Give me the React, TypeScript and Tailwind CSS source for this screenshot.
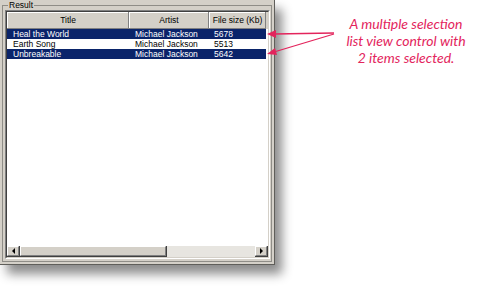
const rows = [
  { title: "Heal the World", artist: "Michael Jackson", size: "5678", selected: true },
  { title: "Earth Song", artist: "Michael Jackson", size: "5513", selected: false },
  { title: "Unbreakable", artist: "Michael Jackson", size: "5642", selected: true },
];

const columns = [
  { label: "Title", width: "w-[122px]" },
  { label: "Artist", width: "w-[80px]" },
  { label: "File size (Kb)", width: "w-[57px]" },
];

const ScrollButton = ({ dir }: { dir: "left" | "right" }) => (
  <div className="w-[13px] h-full bg-[#d4d0c8] border-r border-b border-[#404040] shrink-0">
    <div className="w-full h-full border-l border-t border-white border-r border-b border-r-[#808080] border-b-[#808080] flex items-center justify-center">
      {dir === "left" ? (
        <div className="w-0 h-0 border-y-[3px] border-y-transparent border-r-[3px] border-r-black" />
      ) : (
        <div className="w-0 h-0 border-y-[3px] border-y-transparent border-l-[3px] border-l-black" />
      )}
    </div>
  </div>
);

const ListView = () => (
  <div className="ml-[1px] h-[249px] w-[265px] border-l border-t border-[#808080] border-r border-b border-r-white border-b-white">
    <div className="h-full border-l border-t border-[#404040] border-r border-b border-r-[#d4d0c8] border-b-[#d4d0c8] bg-white flex flex-col">
      <div className="flex h-[17px] bg-[#d4d0c8] shrink-0">
        {columns.map((c) => (
          <div
            key={c.label}
            className={`${c.width} h-full border-r border-b border-[#808080] shrink-0`}
          >
            <div className="h-full border-l border-t border-white flex items-center justify-center text-black">
              {c.label}
            </div>
          </div>
        ))}
      </div>
      {rows.map((r) => (
        <div
          key={r.title}
          className={`flex w-[259px] h-[10px] items-center leading-[10px] ${
            r.selected ? "bg-[#0a246a] text-white" : "bg-white text-black"
          }`}
        >
          <div className="w-[122px] pl-[6px] shrink-0">{r.title}</div>
          <div className="w-[80px] pl-[6px] shrink-0">{r.artist}</div>
          <div className="w-[57px] pl-[5px] shrink-0">{r.size}</div>
        </div>
      ))}
      <div className="flex-1" />
      <div className="flex h-[11px] shrink-0 bg-[#e7e5e0]">
        <ScrollButton dir="left" />
        <div className="w-[147px] h-full bg-[#d4d0c8] border-r border-b border-[#404040] shrink-0">
          <div className="w-full h-full border-l border-t border-white border-r border-b border-r-[#808080] border-b-[#808080]" />
        </div>
        <div className="flex-1" />
        <ScrollButton dir="right" />
      </div>
    </div>
  </div>
);

export default function App() {
  return (
    <div className="relative w-[484px] h-[288px] bg-white flex overflow-hidden font-['Liberation_Sans',Arial,sans-serif] text-[8.5px]">
      <div className="w-[275px] h-[265px] bg-[#d4d0c8] border-r border-b border-[#5f5e5a] shadow-[7px_9px_10px_rgba(0,0,0,0.45)] pl-[2px] shrink-0">
        <fieldset className="w-[270px] h-[262px] border border-[#8f8d87] pl-[1px] pb-[2px] min-w-0">
          <legend className="ml-[4px] px-[1px] leading-[10px] text-black">Result</legend>
          <ListView />
        </fieldset>
      </div>

      <div className="pl-[56px] pt-[15px]">
        <p className="w-[150px] text-center text-[#e3245c] italic text-[14px] leading-[17px] font-['Lato',sans-serif]">
          A multiple selection
          <br />
          list view control with
          <br />
          2 items selected.
        </p>
      </div>

      <svg
        className="absolute left-[262px] top-[26px] pointer-events-none"
        width="80"
        height="36"
        viewBox="0 0 80 36"
      >
        <g stroke="#e3245c" strokeWidth="1.3" fill="none">
          <line x1="72" y1="7" x2="12" y2="8" />
          <line x1="72" y1="8" x2="12" y2="26" />
        </g>
        <g fill="#e3245c">
          <polygon points="5,8 14,4 14,12" />
          <polygon points="5,28 13,22 15,29" />
        </g>
      </svg>
    </div>
  );
}
